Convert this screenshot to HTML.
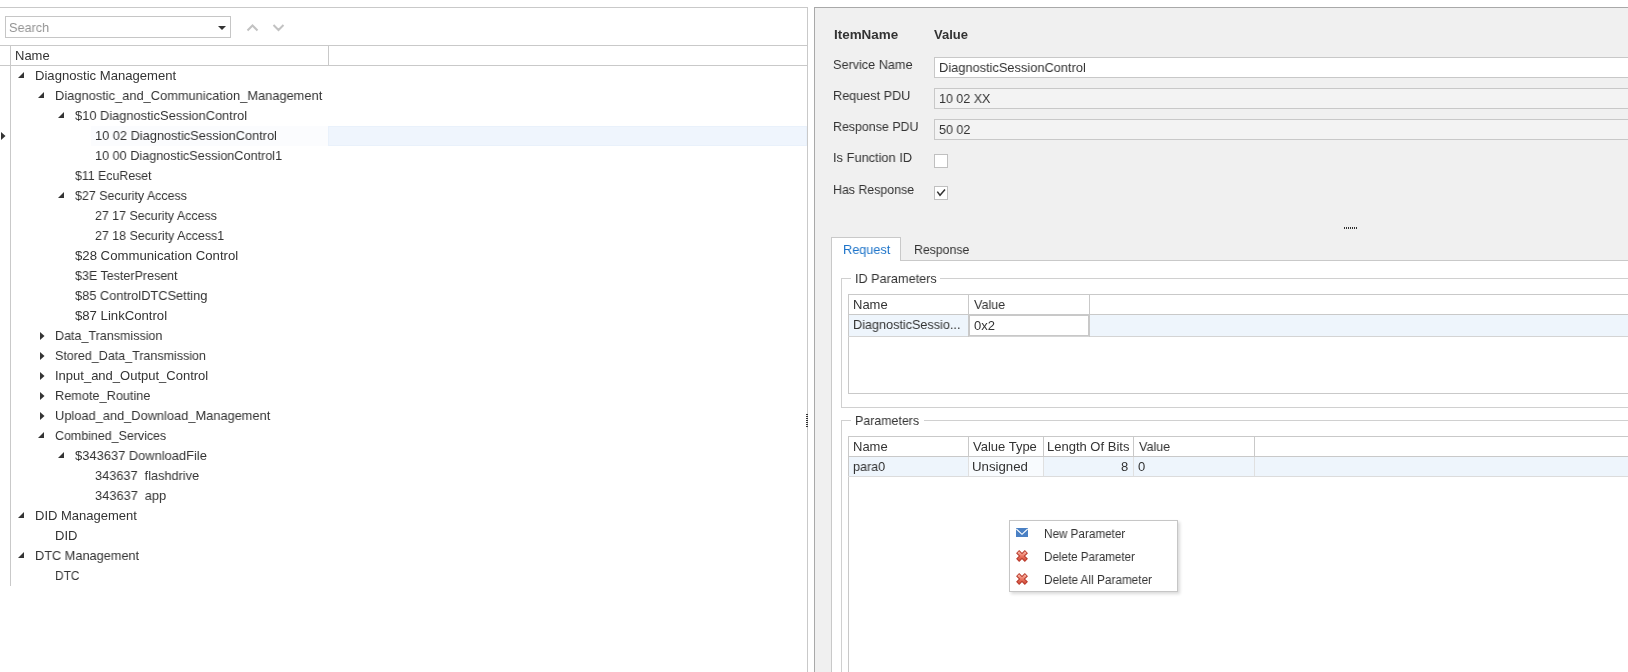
<!DOCTYPE html>
<html><head><meta charset="utf-8"><style>
html,body{margin:0;padding:0;width:1628px;height:672px;overflow:hidden;background:#fff;position:relative}
body div{position:absolute}
svg{display:block}
.t{will-change:transform;font-family:"Liberation Sans",sans-serif;font-size:13px;line-height:20px;color:#333;white-space:nowrap}
</style></head><body>
<div style="left:0px;top:7px;width:808px;height:1px;background:#c9c9c9"></div>
<div style="left:807px;top:7px;width:1px;height:666px;background:#c9c9c9"></div>
<div style="left:5px;top:16px;width:226px;height:22px;border:1px solid #c6c6c6;box-sizing:border-box;background:#fff"></div>
<svg style="position:absolute;left:218px;top:26px" width="8" height="4"><path d="M0 0H8L4 4Z" fill="#333"/></svg>
<svg style="position:absolute;left:246px;top:23px" width="40" height="10"><path d="M1.5 7.5L6.5 2.5L11.5 7.5M27.5 2L32.5 7L37.5 2" fill="none" stroke="#c2c2c2" stroke-width="2"/></svg>
<div style="left:0px;top:45px;width:808px;height:1px;background:#c9c9c9"></div>
<div style="left:0px;top:65px;width:808px;height:1px;background:#c9c9c9"></div>
<div style="left:10px;top:45px;width:1px;height:541px;background:#c9c9c9"></div>
<div style="left:328px;top:45px;width:1px;height:21px;background:#c9c9c9"></div>
<div style="left:91px;top:126px;width:237px;height:20px;background:#fbfcfe"></div>
<div style="left:328px;top:126px;width:479px;height:20px;background:#eff5fd;border:1px solid #e9f1fb;box-sizing:border-box"></div>
<svg style="position:absolute;left:1px;top:132px" width="5" height="8"><path d="M0 0L4.5 4L0 8Z" fill="#333"/></svg>
<svg style="position:absolute;left:18px;top:72px" width="6" height="6"><path d="M6 0V6H0Z" fill="#333"/></svg>
<svg style="position:absolute;left:38px;top:92px" width="6" height="6"><path d="M6 0V6H0Z" fill="#333"/></svg>
<svg style="position:absolute;left:58px;top:112px" width="6" height="6"><path d="M6 0V6H0Z" fill="#333"/></svg>
<svg style="position:absolute;left:58px;top:192px" width="6" height="6"><path d="M6 0V6H0Z" fill="#333"/></svg>
<svg style="position:absolute;left:40px;top:332px" width="5" height="8"><path d="M0 0L4.5 4L0 8Z" fill="#333"/></svg>
<svg style="position:absolute;left:40px;top:352px" width="5" height="8"><path d="M0 0L4.5 4L0 8Z" fill="#333"/></svg>
<svg style="position:absolute;left:40px;top:372px" width="5" height="8"><path d="M0 0L4.5 4L0 8Z" fill="#333"/></svg>
<svg style="position:absolute;left:40px;top:392px" width="5" height="8"><path d="M0 0L4.5 4L0 8Z" fill="#333"/></svg>
<svg style="position:absolute;left:40px;top:412px" width="5" height="8"><path d="M0 0L4.5 4L0 8Z" fill="#333"/></svg>
<svg style="position:absolute;left:38px;top:432px" width="6" height="6"><path d="M6 0V6H0Z" fill="#333"/></svg>
<svg style="position:absolute;left:58px;top:452px" width="6" height="6"><path d="M6 0V6H0Z" fill="#333"/></svg>
<svg style="position:absolute;left:18px;top:512px" width="6" height="6"><path d="M6 0V6H0Z" fill="#333"/></svg>
<svg style="position:absolute;left:18px;top:552px" width="6" height="6"><path d="M6 0V6H0Z" fill="#333"/></svg>
<div style="left:806px;top:414px;width:2px;height:1px;background:#333"></div>
<div style="left:806px;top:416px;width:2px;height:1px;background:#333"></div>
<div style="left:806px;top:418px;width:2px;height:1px;background:#333"></div>
<div style="left:806px;top:420px;width:2px;height:1px;background:#333"></div>
<div style="left:806px;top:422px;width:2px;height:1px;background:#333"></div>
<div style="left:806px;top:424px;width:2px;height:1px;background:#333"></div>
<div style="left:806px;top:426px;width:2px;height:1px;background:#333"></div>
<div style="left:814px;top:7px;width:814px;height:665px;background:#f0f0f0;border-left:1px solid #a9a9a9;border-top:1px solid #a9a9a9;box-sizing:border-box"></div>
<div style="left:934px;top:57px;width:700px;height:21px;background:#fff;border:1px solid #c8c8c8;box-sizing:border-box"></div>
<div style="left:934px;top:88px;width:700px;height:21px;background:#f3f3f3;border:1px solid #c8c8c8;box-sizing:border-box"></div>
<div style="left:934px;top:119px;width:700px;height:21px;background:#f3f3f3;border:1px solid #c8c8c8;box-sizing:border-box"></div>
<div style="left:934px;top:154px;width:14px;height:14px;background:#fff;border:1px solid #c0c0c0;box-sizing:border-box"></div>
<div style="left:934px;top:186px;width:14px;height:14px;background:#fff;border:1px solid #c0c0c0;box-sizing:border-box"></div>
<svg style="position:absolute;left:934px;top:186px" width="14" height="14"><path d="M3.3 5.6L6 9.2L11 3.4" fill="none" stroke="#333" stroke-width="1.5"/></svg>
<div style="left:1344px;top:227px;width:1px;height:2px;background:#333"></div>
<div style="left:1346px;top:227px;width:1px;height:2px;background:#333"></div>
<div style="left:1348px;top:227px;width:1px;height:2px;background:#333"></div>
<div style="left:1350px;top:227px;width:1px;height:2px;background:#333"></div>
<div style="left:1352px;top:227px;width:1px;height:2px;background:#333"></div>
<div style="left:1354px;top:227px;width:1px;height:2px;background:#333"></div>
<div style="left:1356px;top:227px;width:1px;height:2px;background:#333"></div>
<div style="left:832px;top:261px;width:796px;height:411px;background:#fff"></div>
<div style="left:832px;top:238px;width:68px;height:23px;background:#fff"></div>
<div style="left:831px;top:237px;width:1px;height:436px;background:#c9c9c9"></div>
<div style="left:831px;top:237px;width:70px;height:1px;background:#c9c9c9"></div>
<div style="left:900px;top:237px;width:1px;height:24px;background:#c9c9c9"></div>
<div style="left:900px;top:260px;width:729px;height:1px;background:#c9c9c9"></div>
<div style="left:841px;top:278px;width:1px;height:130px;background:#d0d0d0"></div>
<div style="left:841px;top:278px;width:10px;height:1px;background:#d0d0d0"></div>
<div style="left:940px;top:278px;width:689px;height:1px;background:#d0d0d0"></div>
<div style="left:841px;top:407px;width:788px;height:1px;background:#d0d0d0"></div>
<div style="left:848px;top:294px;width:1px;height:100px;background:#c9c9c9"></div>
<div style="left:848px;top:294px;width:781px;height:1px;background:#c9c9c9"></div>
<div style="left:848px;top:314px;width:781px;height:1px;background:#c9c9c9"></div>
<div style="left:848px;top:336px;width:781px;height:1px;background:#d4d4d4"></div>
<div style="left:848px;top:393px;width:781px;height:1px;background:#c9c9c9"></div>
<div style="left:849px;top:315px;width:779px;height:21px;background:#eef5fc"></div>
<div style="left:968px;top:294px;width:1px;height:43px;background:#c9c9c9"></div>
<div style="left:1089px;top:294px;width:1px;height:43px;background:#c9c9c9"></div>
<div style="left:969px;top:315px;width:120px;height:21px;background:#fff;border:1px solid #c8c8c8;box-sizing:border-box"></div>
<div style="left:841px;top:420px;width:1px;height:253px;background:#d0d0d0"></div>
<div style="left:841px;top:420px;width:10px;height:1px;background:#d0d0d0"></div>
<div style="left:924px;top:420px;width:705px;height:1px;background:#d0d0d0"></div>
<div style="left:848px;top:436px;width:1px;height:237px;background:#c9c9c9"></div>
<div style="left:848px;top:436px;width:781px;height:1px;background:#c9c9c9"></div>
<div style="left:848px;top:456px;width:781px;height:1px;background:#c9c9c9"></div>
<div style="left:848px;top:476px;width:781px;height:1px;background:#dcdcdc"></div>
<div style="left:849px;top:457px;width:779px;height:19px;background:#eef5fc"></div>
<div style="left:969px;top:457px;width:74px;height:19px;background:#f8fbfe"></div>
<div style="left:968px;top:436px;width:1px;height:21px;background:#c9c9c9"></div>
<div style="left:968px;top:457px;width:1px;height:19px;background:#e0e0e0"></div>
<div style="left:1043px;top:436px;width:1px;height:21px;background:#c9c9c9"></div>
<div style="left:1043px;top:457px;width:1px;height:19px;background:#e0e0e0"></div>
<div style="left:1133px;top:436px;width:1px;height:21px;background:#c9c9c9"></div>
<div style="left:1133px;top:457px;width:1px;height:19px;background:#e0e0e0"></div>
<div style="left:1254px;top:436px;width:1px;height:21px;background:#c9c9c9"></div>
<div style="left:1254px;top:457px;width:1px;height:19px;background:#e0e0e0"></div>
<div style="left:1009px;top:520px;width:169px;height:72px;background:#fff;border:1px solid #c6c6c6;box-sizing:border-box;box-shadow:2px 2px 3px rgba(0,0,0,0.15)"></div>
<svg style="position:absolute;left:1016px;top:528px" width="12" height="9"><rect width="12" height="9" fill="#4a80c4"/><path d="M0.3 1L6 6.3L11.7 1" fill="none" stroke="#fff" stroke-width="1.1"/></svg>
<svg style="position:absolute;left:1016px;top:550px" width="12" height="12"><defs><linearGradient id="g550" x1="0" y1="0" x2="0" y2="1"><stop offset="0" stop-color="#f7b0a0"/><stop offset="0.5" stop-color="#ec7a66"/><stop offset="1" stop-color="#d2503c"/></linearGradient></defs><path d="M1.6 1.6L10.4 10.4M10.4 1.6L1.6 10.4" stroke="#b83a2c" stroke-width="4.4" stroke-linecap="butt"/><path d="M2.2 2.2L9.8 9.8M9.8 2.2L2.2 9.8" stroke="url(#g550)" stroke-width="2.4" stroke-linecap="butt"/></svg>
<svg style="position:absolute;left:1016px;top:573px" width="12" height="12"><defs><linearGradient id="g573" x1="0" y1="0" x2="0" y2="1"><stop offset="0" stop-color="#f7b0a0"/><stop offset="0.5" stop-color="#ec7a66"/><stop offset="1" stop-color="#d2503c"/></linearGradient></defs><path d="M1.6 1.6L10.4 10.4M10.4 1.6L1.6 10.4" stroke="#b83a2c" stroke-width="4.4" stroke-linecap="butt"/><path d="M2.2 2.2L9.8 9.8M9.8 2.2L2.2 9.8" stroke="url(#g573)" stroke-width="2.4" stroke-linecap="butt"/></svg>
<div class="t" style="left:9.03px;top:18px;transform:scaleX(0.9737);transform-origin:0 0;color:#939393">Search</div>
<div class="t" style="left:15.00px;top:46px;">Name</div>
<div class="t" style="left:34.99px;top:66px;transform:scaleX(1.0072);transform-origin:0 0;">Diagnostic Management</div>
<div class="t" style="left:55.01px;top:86px;transform:scaleX(0.9888);transform-origin:0 0;">Diagnostic_and_Communication_Management</div>
<div class="t" style="left:75.01px;top:106px;transform:scaleX(0.9883);transform-origin:0 0;">$10 DiagnosticSessionControl</div>
<div class="t" style="left:95.02px;top:126px;transform:scaleX(0.9835);transform-origin:0 0;">10 02 DiagnosticSessionControl</div>
<div class="t" style="left:95.03px;top:146px;transform:scaleX(0.9737);transform-origin:0 0;">10 00 DiagnosticSessionControl1</div>
<div class="t" style="left:75.05px;top:166px;transform:scaleX(0.9487);transform-origin:0 0;">$11 EcuReset</div>
<div class="t" style="left:75.04px;top:186px;transform:scaleX(0.9565);transform-origin:0 0;">$27 Security Access</div>
<div class="t" style="left:95.05px;top:206px;transform:scaleX(0.9524);transform-origin:0 0;">27 17 Security Access</div>
<div class="t" style="left:95.05px;top:226px;transform:scaleX(0.9549);transform-origin:0 0;">27 18 Security Access1</div>
<div class="t" style="left:74.99px;top:246px;transform:scaleX(1.0127);transform-origin:0 0;">$28 Communication Control</div>
<div class="t" style="left:75.04px;top:266px;transform:scaleX(0.9615);transform-origin:0 0;">$3E TesterPresent</div>
<div class="t" style="left:75.02px;top:286px;transform:scaleX(0.9848);transform-origin:0 0;">$85 ControlDTCSetting</div>
<div class="t" style="left:74.99px;top:306px;transform:scaleX(1.0114);transform-origin:0 0;">$87 LinkControl</div>
<div class="t" style="left:55.04px;top:326px;transform:scaleX(0.9633);transform-origin:0 0;">Data_Transmission</div>
<div class="t" style="left:55.04px;top:346px;transform:scaleX(0.9610);transform-origin:0 0;">Stored_Data_Transmission</div>
<div class="t" style="left:55.00px;top:366px;">Input_and_Output_Control</div>
<div class="t" style="left:55.02px;top:386px;transform:scaleX(0.9789);transform-origin:0 0;">Remote_Routine</div>
<div class="t" style="left:55.01px;top:406px;transform:scaleX(0.9861);transform-origin:0 0;">Upload_and_Download_Management</div>
<div class="t" style="left:55.04px;top:426px;transform:scaleX(0.9561);transform-origin:0 0;">Combined_Services</div>
<div class="t" style="left:75.01px;top:446px;transform:scaleX(0.9923);transform-origin:0 0;">$343637 DownloadFile</div>
<div class="t" style="left:95.02px;top:466px;transform:scaleX(0.9808);transform-origin:0 0;">343637&nbsp; flashdrive</div>
<div class="t" style="left:95.01px;top:486px;transform:scaleX(0.9857);transform-origin:0 0;">343637&nbsp; app</div>
<div class="t" style="left:35.00px;top:506px;">DID Management</div>
<div class="t" style="left:55.00px;top:526px;">DID</div>
<div class="t" style="left:35.02px;top:546px;transform:scaleX(0.9808);transform-origin:0 0;">DTC Management</div>
<div class="t" style="left:55.08px;top:566px;transform:scaleX(0.9167);transform-origin:0 0;">DTC</div>
<div class="t" style="left:833.97px;top:25px;transform:scaleX(1.0333);transform-origin:0 0;font-weight:bold">ItemName</div>
<div class="t" style="left:934.00px;top:25px;font-weight:bold">Value</div>
<div class="t" style="left:833.03px;top:55px;transform:scaleX(0.9747);transform-origin:0 0;">Service Name</div>
<div class="t" style="left:833.03px;top:86px;transform:scaleX(0.9737);transform-origin:0 0;">Request PDU</div>
<div class="t" style="left:833.05px;top:117px;transform:scaleX(0.9540);transform-origin:0 0;">Response PDU</div>
<div class="t" style="left:833.01px;top:148px;transform:scaleX(0.9872);transform-origin:0 0;">Is Function ID</div>
<div class="t" style="left:833.05px;top:180px;transform:scaleX(0.9518);transform-origin:0 0;">Has Response</div>
<div class="t" style="left:939.01px;top:58px;transform:scaleX(0.9863);transform-origin:0 0;">DiagnosticSessionControl</div>
<div class="t" style="left:939.04px;top:89px;transform:scaleX(0.9608);transform-origin:0 0;">10 02 XX</div>
<div class="t" style="left:939.03px;top:120px;transform:scaleX(0.9667);transform-origin:0 0;">50 02</div>
<div class="t" style="left:843.02px;top:240px;transform:scaleX(0.9783);transform-origin:0 0;color:#1e74c9">Request</div>
<div class="t" style="left:914.05px;top:240px;transform:scaleX(0.9464);transform-origin:0 0;">Response</div>
<div class="t" style="left:855.02px;top:269px;transform:scaleX(0.9753);transform-origin:0 0;">ID Parameters</div>
<div class="t" style="left:853.00px;top:295px;">Name</div>
<div class="t" style="left:974.00px;top:295px;transform:scaleX(0.9677);transform-origin:0 0;">Value</div>
<div class="t" style="left:853.03px;top:315px;transform:scaleX(0.9720);transform-origin:0 0;">DiagnosticSessio...</div>
<div class="t" style="left:974.00px;top:316px;">0x2</div>
<div class="t" style="left:855.05px;top:411px;transform:scaleX(0.9538);transform-origin:0 0;">Parameters</div>
<div class="t" style="left:853.00px;top:437px;">Name</div>
<div class="t" style="left:973.00px;top:437px;">Value Type</div>
<div class="t" style="left:1047.00px;top:437px;">Length Of Bits</div>
<div class="t" style="left:1139.00px;top:437px;transform:scaleX(0.9677);transform-origin:0 0;">Value</div>
<div class="t" style="left:853.03px;top:457px;transform:scaleX(0.9677);transform-origin:0 0;">para0</div>
<div class="t" style="left:971.98px;top:457px;transform:scaleX(1.0192);transform-origin:0 0;">Unsigned</div>
<div class="t" style="left:1121.00px;top:457px;">8</div>
<div class="t" style="left:1138.00px;top:457px;">0</div>
<div class="t" style="left:1044.02px;top:524px;transform:scaleX(0.9753);transform-origin:0 0;font-size:12px">New Parameter</div>
<div class="t" style="left:1044.03px;top:547px;transform:scaleX(0.9674);transform-origin:0 0;font-size:12px">Delete Parameter</div>
<div class="t" style="left:1044.02px;top:570px;transform:scaleX(0.9815);transform-origin:0 0;font-size:12px">Delete All Parameter</div>
</body></html>
